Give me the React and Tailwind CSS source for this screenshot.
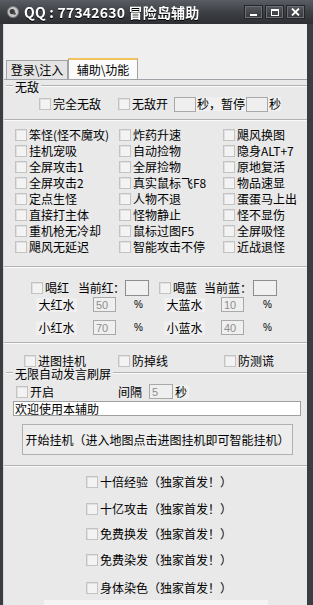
import React from 'react';

const grid = [
  ['笨怪(怪不魔攻)', '炸药升速', '飓风换图'],
  ['挂机宠吸', '自动捡物', '隐身ALT+7'],
  ['全屏攻击1', '全屏捡物', '原地复活'],
  ['全屏攻击2', '真实鼠标飞F8', '物品速显'],
  ['定点生怪', '人物不退', '蛋蛋马上出'],
  ['直接打主体', '怪物静止', '怪不显伤'],
  ['重机枪无冷却', '鼠标过图F5', '全屏吸怪'],
  ['飓风无延迟', '智能攻击不停', '近战退怪'],
];

const Box = () => (
  <span className="block w-[12px] h-[12px] shrink-0 border border-[#c3c3c3] bg-[#f3f3f3] shadow-[inset_1px_1px_0_#e0e0e0]" />
);

const Check = ({ children, className = '' }) => (
  <div className={`flex items-center gap-[2px] shrink-0 ${className}`}>
    <Box />
    <span className="whitespace-nowrap">{children}</span>
  </div>
);

const Field = ({ value = '', className = '' }) => (
  <span className={`flex items-center shrink-0 pl-[2px] h-[15px] border border-[#a9a9a9] bg-[#efefef] text-[11px] text-[#8e8e8e] font-['Liberation_Sans',sans-serif] ${className}`}>
    {value}
  </span>
);

const Rule = ({ className = '' }) => (
  <div className={`h-[2px] shrink-0 border-t border-[#b2b2b2] border-b border-b-[#fafafa] ${className}`} />
);

const GroupHead = ({ label, className = '' }) => (
  <div className={`flex items-start h-[14px] pl-[2px] ${className}`}>
    <Rule className="w-[7px] mt-[5px]" />
    <span className="px-[2px] leading-[14px]">{label}</span>
    <Rule className="flex-1 mt-[5px]" />
  </div>
);

const WinBtn = ({ children }) => (
  <div className="w-[19px] h-[14px] flex items-center justify-center border border-[#24262a] bg-linear-to-b from-[#55585e] to-[#36383d] shadow-[inset_0_0_0_1px_#6b6e74]">
    {children}
  </div>
);

export default function App() {
  return (
    <div className="w-[313px] h-[605px] overflow-hidden flex flex-col bg-[#3a3d42] text-[12px] leading-[14px] text-black font-['Noto_Sans_CJK_SC','Liberation_Sans',sans-serif]">
      {/* title bar */}
      <div className="h-[24px] shrink-0 flex items-center pl-[7px] pr-[8px] bg-linear-to-b from-[#5a5d63] via-[#3d4045] to-[#2d2f33]">
        <svg width="12" height="12" viewBox="0 0 12 12">
          <circle cx="6" cy="6" r="5.5" fill="#c9c9c9" stroke="#7a7a7a" />
          <circle cx="5.2" cy="5.6" r="2.6" fill="#3a3a3a" />
          <circle cx="7.5" cy="7.6" r="1.4" fill="#555" />
        </svg>
        <span className="ml-[5px] text-white font-bold text-[14px] tracking-[0.2px] drop-shadow-[0_1px_0_#000]">
          QQ : 77342630 冒险岛辅助
        </span>
        <div className="ml-auto flex gap-[2px]">
          <WinBtn>
            <span className="block w-[7px] h-[2px] bg-white mt-[6px]" />
          </WinBtn>
          <WinBtn>
            <span className="block w-[8px] h-[7px] border-[1.5px] border-white border-t-2" />
          </WinBtn>
          <WinBtn>
            <svg width="9" height="8" viewBox="0 0 9 8">
              <path d="M1 0.5 L8 7.5 M8 0.5 L1 7.5" stroke="white" strokeWidth="1.8" />
            </svg>
          </WinBtn>
        </div>
      </div>

      {/* body */}
      <div className="flex-1 ml-[3px] mr-[6px] flex flex-col bg-[#efefef] border-l border-[#d8d8d8]">
        {/* tabs */}
        <div className="mt-[34px] flex items-end h-[21px] pl-[2px]">
          <div className="w-[62px] h-[19px] flex items-center justify-center border border-b-0 border-[#9fa3a8] bg-[#e4e4e4]">
            {'登录\\注入'}
          </div>
          <div className="w-[70px] h-[21px] flex items-center justify-center border-x border-[#9fa3a8] border-t-2 border-t-[#f2c25e] bg-[#fbfbfb]">
            {'辅助\\功能'}
          </div>
        </div>

        {/* panel */}
        <div className="flex-1 flex flex-col border-t border-[#9fa3a8] bg-[#e9e9e9]">
          <GroupHead label="无敌" />
          <div className="mt-[3px] h-[14px] flex items-center pl-[35px]">
            <Check className="w-[79px]">完全无敌</Check>
            <Check className="w-[56px]">无敌开</Check>
            <Field className="w-[22px] h-[14px]" />
            <span className="w-[50px] pl-[1px] bg-[#f0f0f0] whitespace-nowrap">秒，暂停</span>
            <Field className="w-[22px] h-[14px]" />
            <span className="pl-[1px] bg-[#f0f0f0]">秒</span>
          </div>
          <Rule className="mt-[8px]" />

          <div className="mt-[6px] grid grid-cols-[104px_104px_1fr] auto-rows-[16px] pl-[11px]">
            {grid.flat().map((t, i) => (
              <Check key={i}>{t}</Check>
            ))}
          </div>
          <Rule className="mt-[11px]" />

          {/* potions */}
          <div className="mt-[12px] h-[16px] flex items-center pl-[27px]">
            <Check className="w-[47px]">喝红</Check>
            <span className="w-[47px] shrink-0 whitespace-nowrap tracking-[-0.3px]">当前红：</span>
            <span className="w-[24px] h-[16px] shrink-0 border border-[#8d8d8d] bg-[#f0f0f0]" />
            <span className="w-[10px] shrink-0" />
            <Check className="w-[45px]">喝蓝</Check>
            <span className="w-[49px] shrink-0 whitespace-nowrap">当前蓝：</span>
            <span className="w-[24px] h-[16px] shrink-0 border border-[#8d8d8d] bg-[#f0f0f0]" />
          </div>
          <div className="mt-[1px] h-[15px] flex items-center pl-[32px]">
            <span className="w-[41px] text-center bg-[#f0f0f0]">大红水</span>
            <span className="w-[16px]" />
            <Field className="w-[23px]" value="50" />
            <span className="w-[18px]" />
            <span className="w-[30px] text-[10px] font-['Liberation_Sans',sans-serif]">%</span>
            <span className="w-[41px] text-center bg-[#f0f0f0]">大蓝水</span>
            <span className="w-[16px]" />
            <Field className="w-[23px]" value="10" />
            <span className="w-[19px]" />
            <span className="text-[10px] font-['Liberation_Sans',sans-serif]">%</span>
          </div>
          <div className="mt-[8px] h-[15px] flex items-center pl-[32px]">
            <span className="w-[41px] text-center bg-[#f0f0f0]">小红水</span>
            <span className="w-[16px]" />
            <Field className="w-[23px]" value="70" />
            <span className="w-[18px]" />
            <span className="w-[30px] text-[10px] font-['Liberation_Sans',sans-serif]">%</span>
            <span className="w-[41px] text-center bg-[#f0f0f0]">小蓝水</span>
            <span className="w-[16px]" />
            <Field className="w-[23px]" value="40" />
            <span className="w-[19px]" />
            <span className="text-[10px] font-['Liberation_Sans',sans-serif]">%</span>
          </div>
          <Rule className="mt-[7px]" />

          <div className="mt-[11px] h-[12px] flex items-center pl-[20px] leading-[12px]">
            <Check className="w-[94px]">进图挂机</Check>
            <Check className="w-[106px]">防掉线</Check>
            <Check>防测谎</Check>
          </div>

          <GroupHead label="无限自动发言刷屏" />
          <div className="mt-[3px] h-[15px] flex items-center pl-[12px]">
            <Check className="w-[102px]">开启</Check>
            <span className="w-[31px]">间隔</span>
            <Field className="w-[24px]" value="5" />
            <span className="pl-[2px] pr-[2px] bg-[#f0f0f0]">秒</span>
          </div>
          <div className="mt-[2px] ml-[9px] w-[288px] h-[15px] flex items-center pl-[1px] border border-[#a0a0a0] bg-white">
            欢迎使用本辅助
          </div>
          <div className="mt-[8px] ml-[18px] w-[271px] h-[31px] flex items-center justify-center border border-[#b0b0b0] bg-[#ededed] whitespace-nowrap">
            开始挂机（进入地图点击进图挂机即可智能挂机）
          </div>
          <Rule className="mt-[10px]" />

          <div className="pl-[82px] flex flex-col">
            <Check className="mt-[8px] h-[14px]">十倍经验（独家首发！）</Check>
            <Check className="mt-[13px] h-[14px]">十亿攻击（独家首发！）</Check>
            <Check className="mt-[11px] h-[14px]">免费换发（独家首发！）</Check>
            <Check className="mt-[12px] h-[14px]">免费染发（独家首发！）</Check>
            <Check className="mt-[14px] h-[14px]">身体染色（独家首发！）</Check>
          </div>
          <div className="mt-[5px] ml-[40px] w-[224px] h-[10px] bg-[#f4f4f4]" />
        </div>
      </div>
    </div>
  );
}
